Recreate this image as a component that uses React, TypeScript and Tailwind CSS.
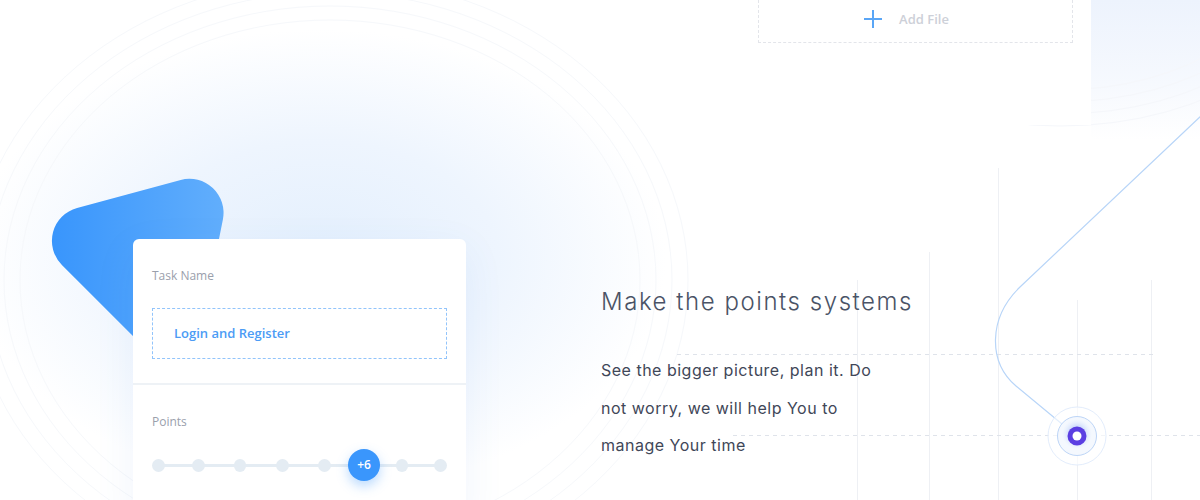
import React from "react";

// gap before each dot (edge to edge), matching the reference spacing
const dotGaps = ["ml-0", "ml-[27px]", "ml-[29px]", "ml-[30px]", "ml-[29px]", "ml-[27px]", "ml-[25px]", "ml-[26px]"];

function Blob() {
  return (
    <svg className="absolute left-0 top-0" width="260" height="420" viewBox="0 0 260 420">
      <defs>
        <linearGradient id="blobFill" x1="50" y1="0" x2="230" y2="0" gradientUnits="userSpaceOnUse">
          <stop offset="0" stopColor="#3895fc" />
          <stop offset="1" stopColor="#63affc" />
        </linearGradient>
      </defs>
      <path
        d="M 77.1 208 L 180.7 180 A 34 34 0 0 1 222.9 219.5 L 200.9 329.4 A 34 34 0 0 1 143.7 346.7 L 61.9 264.9 A 34 34 0 0 1 77.1 208 Z"
        fill="url(#blobFill)"
      />
    </svg>
  );
}

function Backdrop() {
  return (
    <>
      {/* soft blue glow behind the card */}
      <div className="absolute left-[-40px] top-[20px] h-[480px] w-[720px] rounded-full bg-[radial-gradient(ellipse_at_center,#e3effd_0%,#eef5fe_35%,rgba(255,255,255,0)_68%)]" />
      <div className="absolute left-[1091px] top-0 h-[140px] w-[120px] bg-[linear-gradient(180deg,#edf3fd_0%,#f6f9fe_60%,rgba(255,255,255,0)_100%)]" />

      <svg className="absolute left-0 top-0" width="1200" height="500" viewBox="0 0 1200 500" fill="none">
        {/* faint contour lines */}
        {[0, 1, 2, 3].map((i) => (
          <ellipse
            key={i}
            cx="330"
            cy="280"
            rx={310 + i * 16}
            ry={260 + i * 14}
            stroke="#f6f8fb"
            strokeWidth="1"
          />
        ))}
        {[0, 1, 2, 3].map((i) => (
          <ellipse
            key={"r" + i}
            cx="1060"
            cy="-60"
            rx={230 + i * 16}
            ry={150 + i * 12}
            stroke="#f5f7fb"
            strokeWidth="1"
          />
        ))}

        {/* grid */}
        <line x1="857.5" y1="280" x2="857.5" y2="500" stroke="#eef0f4" />
        <line x1="929.5" y1="252" x2="929.5" y2="500" stroke="#eef0f4" />
        <line x1="998.5" y1="168" x2="998.5" y2="500" stroke="#eef0f4" />
        <line x1="1077.5" y1="300" x2="1077.5" y2="500" stroke="#eef0f4" />
        <line x1="1151.5" y1="280" x2="1151.5" y2="500" stroke="#eef0f4" />
        <line x1="677" y1="354.5" x2="1153" y2="354.5" stroke="#dfe3ea" strokeDasharray="4 4" />
        <line x1="733" y1="435.5" x2="1200" y2="435.5" stroke="#dfe3ea" strokeDasharray="4 4" />

        {/* route */}
        <path
          d="M 1202 115 L 1020 287 C 988 318 988 362 1016 386 L 1068 429"
          stroke="#b8d5f8"
          strokeWidth="1.2"
        />
        <defs>
          <radialGradient id="glow">
            <stop offset="0" stopColor="#6f8ff5" stopOpacity="0.9" />
            <stop offset="1" stopColor="#cfe0fb" stopOpacity="0" />
          </radialGradient>
        </defs>
        <circle cx="1077" cy="436" r="29" fill="#ffffff" fillOpacity="0.6" stroke="#e3edfc" />
        <circle cx="1077" cy="436" r="19.5" fill="#f4f8fe" stroke="#bdd5f7" />
        <circle cx="1077" cy="434" r="15" fill="url(#glow)" />
        <circle cx="1077" cy="436" r="9.5" fill="#5b3fe2" />
        <circle cx="1077" cy="436" r="4.5" fill="#ffffff" />
      </svg>
    </>
  );
}

function TaskCard() {
  return (
    <div className="relative w-[333px] shrink-0 rounded-md bg-white shadow-[0_12px_40px_rgba(70,130,220,0.08)] font-['Open_Sans',sans-serif]">
      <div className="px-[19px] pt-7 pb-6">
        <div className="text-[12px] leading-[18px] text-[#9aa0ac]">Task Name</div>
        <div className="mt-[23px] flex h-[51px] items-center border border-dashed border-[#92c4fb] pl-[21px] text-[13px] font-semibold text-[#4c9cf5]">
          Login and Register
        </div>
      </div>
      <div className="h-[2px] bg-[#eef2f6]" />
      <div className="px-[19px] pt-7 pb-10">
        <div className="text-[12px] leading-[18px] text-[#9aa0ac]">Points</div>
        <div className="relative mt-[18px] flex h-8 items-center">
          <div className="absolute left-[6px] right-[6px] top-[15px] h-[3px] bg-[#e4ecf3]" />
          {dotGaps.map((gap, i) =>
            i === 5 ? (
              <div key={i} className={`relative z-10 flex h-[13px] w-[13px] items-center justify-center ${gap}`}>
                <div className="absolute flex h-8 w-8 items-center justify-center rounded-full bg-[#3a96fc] text-[12px] font-semibold text-white shadow-[0_5px_12px_rgba(58,150,252,0.35)]">
                  +6
                </div>
              </div>
            ) : (
              <div key={i} className={`relative z-10 h-[13px] w-[13px] rounded-full bg-[#e4ecf3] ${gap}`} />
            )
          )}
        </div>
      </div>
    </div>
  );
}

export default function App() {
  return (
    <div className="relative h-[500px] w-[1200px] overflow-hidden bg-white">
      <Backdrop />
      <Blob />

      {/* top file card */}
      <div className="absolute left-[740px] top-[-90px] h-[215px] w-[351px] bg-white px-[18px] pt-[40px] font-['Open_Sans',sans-serif]">
        <div className="flex h-[93px] items-end justify-center border border-dashed border-[#e3e5ea] pb-[13px]">
          <div className="flex items-center gap-[17px] pr-[18px]">
            <svg width="18" height="18" viewBox="0 0 18 18">
              <path d="M9 0 V18 M0 9 H18" stroke="#5aa6f6" strokeWidth="2" />
            </svg>
            <span className="text-[13px] font-semibold text-[#cdd0d8]">Add File</span>
          </div>
        </div>
      </div>

      <div className="relative flex pl-[133px] pt-[239px]">
        <TaskCard />
        <div className="ml-[135px] mt-[47px] font-['Inter',sans-serif] text-[#4a5366]">
          <h2 className="text-[24px] font-light leading-[32px] tracking-[1.55px]">Make the points systems</h2>
          <p className="mt-[34px] text-[16px] leading-[37.5px] tracking-[0.5px] text-[#3f4758]">
            See the bigger picture, plan it. Do
            <br />
            not worry, we will help You to
            <br />
            manage Your time
          </p>
        </div>
      </div>
    </div>
  );
}
